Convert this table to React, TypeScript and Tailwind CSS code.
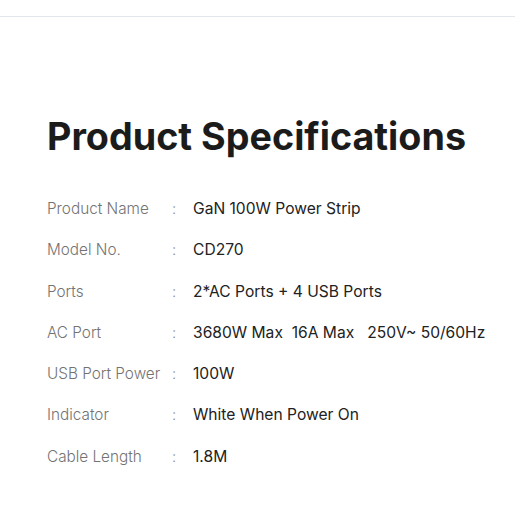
const specs: [string, string][] = [
  ['Product Name', 'GaN 100W Power Strip'],
  ['Model No.', 'CD270'],
  ['Ports', '2*AC Ports + 4 USB Ports'],
  ['AC Port', '3680W Max\u00a0\u00a016A Max\u00a0\u00a0\u00a0250V~ 50/60Hz'],
  ['USB Port Power', '100W'],
  ['Indicator', 'White When Power On'],
  ['Cable Length', '1.8M'],
];

export default function App() {
  return (
    <div className="w-[515px] h-[515px] bg-white font-['Inter',sans-serif] overflow-hidden">
      <div className="h-[17px] border-b border-[#e3e6ec]" />
      <div className="pl-[47px] pt-[97px]">
        <h1 className="text-[37.7px] leading-[44px] font-bold text-[#1b1b1b]">
          Product Specifications
        </h1>
        <div className="mt-[30px] flex flex-col">
          {specs.map(([label, value]) => (
            <div key={label} className="flex items-baseline h-[41.3px] leading-[41.3px]">
              <span className="w-[125px] text-[15.3px] text-[#737373] font-light">{label}</span>
              <span className="w-[21px] text-[15px] text-[#8a8a8a] font-light">:</span>
              <span className="text-[15.6px] text-[#222] whitespace-pre">{value}</span>
            </div>
          ))}
        </div>
      </div>
    </div>
  );
}
